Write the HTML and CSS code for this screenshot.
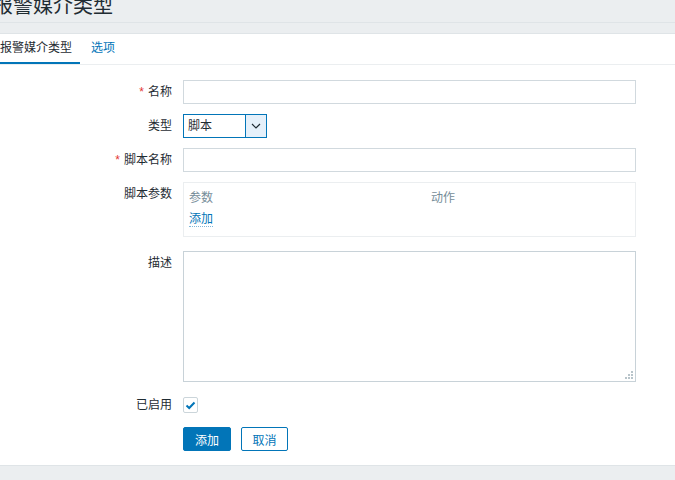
FILE: index.html
```html
<!DOCTYPE html>
<html lang="zh-CN">
<head>
<meta charset="utf-8">
<title>报警媒介类型</title>
<link rel="stylesheet" href="styles.css">
</head>
<body>
<header class="page-header">
  <h1 class="page-title">报警媒介类型</h1>
</header>
<div class="sub-bar"></div>
<main class="panel">
  <nav class="tabs">
    <a class="tab tab-active">报警媒介类型</a>
    <a class="tab">选项</a>
  </nav>
  <form class="form">
    <label class="label"><span class="req">*</span>名称</label>
    <div class="field"><input class="input" type="text"></div>

    <label class="label">类型</label>
    <div class="field">
      <div class="select">
        <span class="select-value">脚本</span>
        <span class="select-btn">
          <svg width="10" height="6" viewBox="0 0 10 6"><path d="M1 1 L5 5 L9 1" fill="none" stroke="#1f2c33" stroke-width="1.2"/></svg>
        </span>
      </div>
    </div>

    <label class="label"><span class="req">*</span>脚本名称</label>
    <div class="field"><input class="input" type="text"></div>

    <label class="label">脚本参数</label>
    <div class="field params-field">
      <div class="params">
        <div class="params-head">
          <span class="col-param">参数</span>
          <span class="col-action">动作</span>
        </div>
        <div class="params-row"><a class="link">添加</a></div>
      </div>
    </div>

    <label class="label">描述</label>
    <div class="field desc-field">
      <textarea class="textarea"></textarea>
      <svg class="grip" width="8" height="8" viewBox="0 0 8 8">
        <rect x="6" y="0" width="2" height="2" fill="#b8c4ca"/>
        <rect x="3" y="3" width="2" height="2" fill="#b8c4ca"/>
        <rect x="6" y="3" width="2" height="2" fill="#b8c4ca"/>
        <rect x="0" y="6" width="2" height="2" fill="#b8c4ca"/>
        <rect x="3" y="6" width="2" height="2" fill="#b8c4ca"/>
        <rect x="6" y="6" width="2" height="2" fill="#b8c4ca"/>
      </svg>
    </div>

    <label class="label label-check">已启用</label>
    <div class="field check-field">
      <span class="checkbox">
        <svg width="11" height="9" viewBox="0 0 11 9"><path d="M1.5 4.5 L4.2 7 L9.5 1.5" fill="none" stroke="#0275b8" stroke-width="2"/></svg>
      </span>
    </div>

    <div></div>
    <div class="field buttons">
      <button type="button" class="btn btn-primary">添加</button>
      <button type="button" class="btn btn-alt">取消</button>
    </div>
  </form>
</main>
<footer class="footer"></footer>
</body>
</html>
```

FILE: styles.css
```css
* { box-sizing: border-box; }

html, body {
  margin: 0;
  padding: 0;
  overflow: hidden;
}

body {
  width: 675px;
  height: 480px;
  background: #ebeef0;
  font-family: "Liberation Sans", Arial, "Noto Sans CJK SC", sans-serif;
  font-size: 12px;
  color: #1f2c33;
}

.page-header {
  height: 23px;
  border-bottom: 1px solid #dfe4e7;
  overflow: hidden;
}

.page-title {
  margin: -5px 0 0 -7px;
  font-size: 20px;
  line-height: 22px;
  font-weight: normal;
  color: #1f2c33;
  white-space: nowrap;
}

.sub-bar {
  height: 11px;
  border-bottom: 1px solid #dfe4e7;
}

.panel {
  background: #fff;
  height: 432px;
  border-bottom: 1px solid #dfe4e7;
}

.tabs {
  display: flex;
  height: 31px;
  border-bottom: 1px solid #ebeef0;
}

.tab {
  display: block;
  height: 30px;
  line-height: 28px;
  padding: 0 8px 0 0;
  color: #0275b8;
  border-bottom: 2px solid transparent;
  white-space: nowrap;
}

.tab + .tab {
  margin-left: 11px;
}

.tab-active {
  color: #1f2c33;
  border-bottom-color: #0275b8;
}

.form {
  display: grid;
  grid-template-columns: 172px 453px;
  column-gap: 11px;
  row-gap: 10px;
  padding-top: 15px;
  align-items: start;
}

.label {
  text-align: right;
  line-height: 24px;
  white-space: nowrap;
}

.req {
  color: #e33734;
  margin-right: 4px;
}

.input {
  display: block;
  width: 453px;
  height: 24px;
  margin: 0;
  border: 1px solid #d1d9de;
  border-radius: 0;
  background: #fff;
  font: inherit;
  outline: none;
}

.select {
  display: flex;
  width: 84px;
  height: 24px;
  border: 1px solid #0275b8;
  background: #fff;
}

.select-value {
  flex: 1;
  line-height: 22px;
  padding-left: 4px;
}

.select-btn {
  width: 21px;
  height: 22px;
  border-left: 1px solid #0275b8;
  background: #e5f0fa;
  display: flex;
  align-items: center;
  justify-content: center;
}

.params-field {
  margin-bottom: 4px;
}

.params {
  height: 55px;
  border: 1px solid #ebeef0;
  padding: 5px 5px 6px;
}

.params-head {
  display: flex;
  height: 20px;
  line-height: 20px;
  color: #768d99;
}

.col-param {
  width: 242px;
}

.params-row {
  height: 22px;
  line-height: 22px;
}

.link {
  color: #0275b8;
  border-bottom: 1px dotted #7fb6d9;
}

.desc-field {
  position: relative;
  margin-bottom: 5px;
}

.textarea {
  display: block;
  width: 453px;
  height: 131px;
  margin: 0;
  border: 1px solid #c8d2d8;
  background: #fff;
  font: inherit;
  outline: none;
  resize: none;
}

.grip {
  position: absolute;
  right: 3px;
  bottom: 3px;
}

.label-check {
  line-height: 16px;
}

.check-field {
  height: 16px;
  margin-bottom: 4px;
}

.checkbox {
  display: flex;
  align-items: center;
  justify-content: center;
  width: 15px;
  height: 16px;
  border: 1px solid #cbd5da;
  border-radius: 2px;
  background: #fff;
}

.buttons {
  display: flex;
  gap: 10px;
}

.btn {
  height: 24px;
  margin: 0;
  padding: 0;
  font: inherit;
  border-radius: 2px;
  cursor: pointer;
}

.btn-primary {
  width: 48px;
  background: #0275b8;
  border: 1px solid #0275b8;
  color: #fff;
}

.btn-alt {
  width: 47px;
  background: #fff;
  border: 1px solid #0275b8;
  color: #0275b8;
}

.footer {
  height: 14px;
}
```
